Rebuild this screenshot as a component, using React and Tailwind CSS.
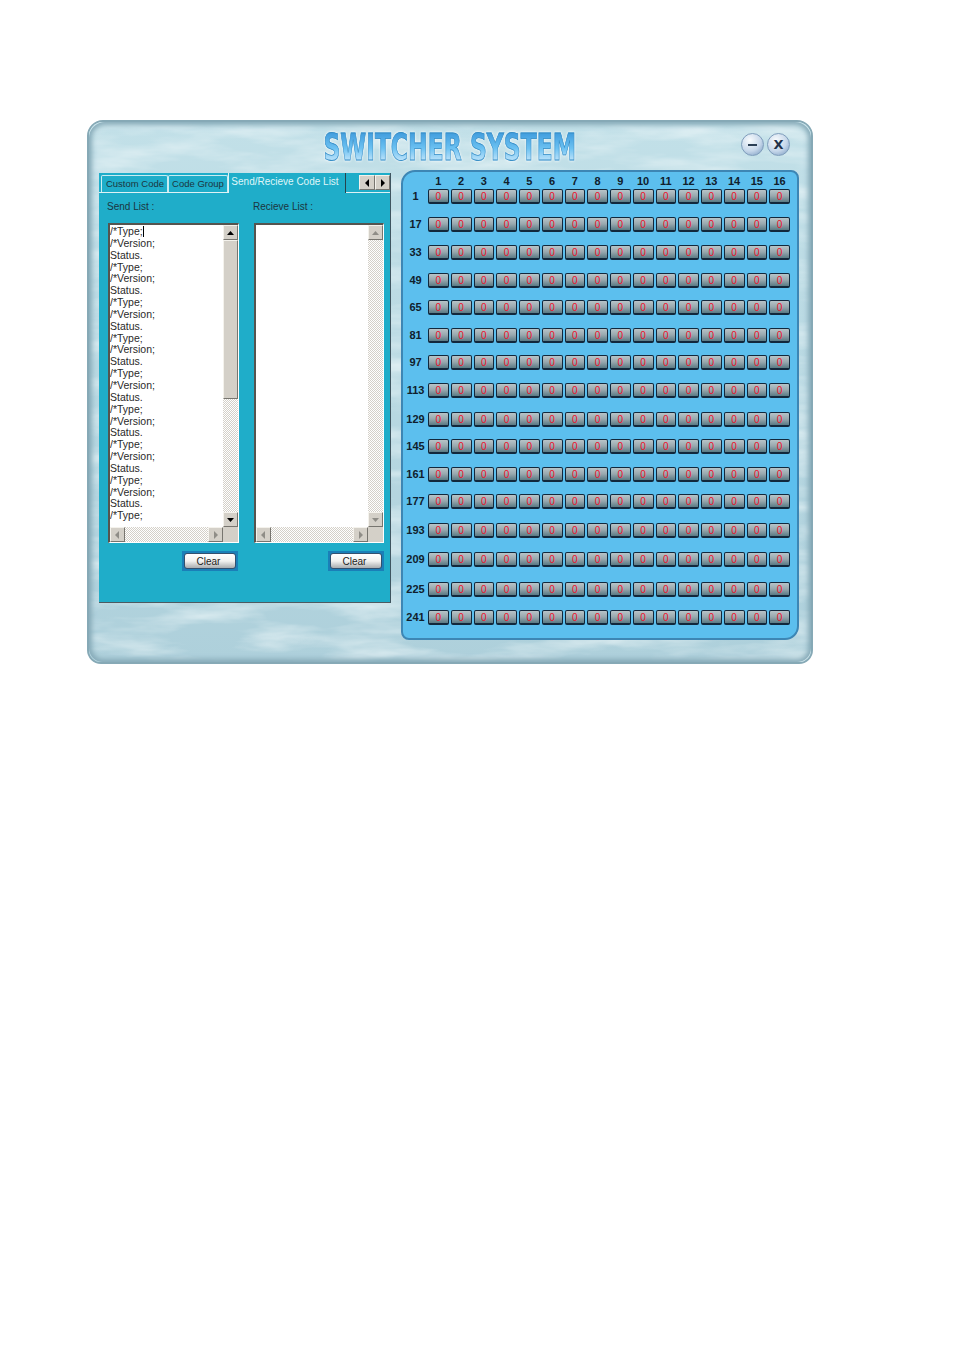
import React from 'react'

const rowMargins = [
  [1, 'mt-0'], [17, 'mt-[13px]'], [33, 'mt-[13px]'], [49, 'mt-[13px]'],
  [65, 'mt-[12px]'], [81, 'mt-[13px]'], [97, 'mt-[12px]'], [113, 'mt-[13px]'],
  [129, 'mt-[14px]'], [145, 'mt-[12px]'], [161, 'mt-[13px]'], [177, 'mt-[12px]'],
  [193, 'mt-[14px]'], [209, 'mt-[14px]'], [225, 'mt-[15px]'], [241, 'mt-[13px]'],
]
const columns = Array.from({ length: 16 }, (_, i) => i + 1)
const sendLines = Array.from({ length: 25 }, (_, i) => ['/*Type;', '/*Version;', 'Status.'][i % 3])

const bevel = 'border border-t-[#f4f2ec] border-l-[#f4f2ec] border-r-[#77756f] border-b-[#77756f] bg-[#d4d0c8]'
const hatch = 'bg-[repeating-conic-gradient(#d4d0c8_0_25%,#ffffff_0_50%)] bg-[length:2px_2px]'

const Arrow = ({ dir, color = '#000', size = 7 }) => {
  const points = { up: '0,6 7,6 3.5,2', down: '0,2 7,2 3.5,6', left: '5,0 5,8 1,4', right: '2,0 2,8 6,4' }
  return (
    <svg width={size} height={size + 1} viewBox="0 0 7 8">
      <polygon points={points[dir]} fill={color} />
    </svg>
  )
}

const ScrollButton = ({ dir, color, className = 'w-[15px] h-[15px]' }) => (
  <div className={`${bevel} ${className} flex items-center justify-center shrink-0`}>
    <Arrow dir={dir} color={color} />
  </div>
)

function ListBox({ lines, active }) {
  const arrow = active ? '#000' : '#8f8d87'
  return (
    <div className="w-[131px] h-[320px] flex flex-col border-t-2 border-l-2 border-t-[#55544f] border-l-[#55544f] border-r border-b border-r-white border-b-white bg-white">
      <div className="flex flex-1 min-h-0">
        <div className="flex-1 overflow-hidden pt-[1px] text-[10.5px] leading-[11.84px] text-[#2a2a2a]">
          {lines.map((line, i) => (
            <div key={i} className="whitespace-nowrap">
              {line}
              {i === 0 && <span className="inline-block w-px h-[11px] bg-black align-top" />}
            </div>
          ))}
        </div>
        <div className={`w-[15px] flex flex-col ${hatch}`}>
          <ScrollButton dir="up" color={arrow} />
          {active && <div className={`${bevel} h-[159px]`} />}
          <div className="flex-1" />
          <ScrollButton dir="down" color={arrow} />
        </div>
      </div>
      <div className={`h-[15px] flex ${hatch}`}>
        <ScrollButton dir="left" color="#8f8d87" />
        <div className="flex-1" />
        <ScrollButton dir="right" color="#8f8d87" />
        <div className="w-[15px] bg-[#d4d0c8]" />
      </div>
    </div>
  )
}

const ClearButton = () => (
  <div className="w-[56px] h-[20px] bg-[#1a7fb8] p-[2px] flex">
    <div className="flex-1 rounded-[3px] border border-[#32506e] bg-linear-to-b from-white via-[#f2f2f0] to-[#a9adb0] flex items-center justify-center pr-[3px] text-[10px] text-[#222]">
      Clear
    </div>
  </div>
)

function LeftPanel() {
  return (
    <div className="w-[292px] h-[430px] mt-[3px] relative bg-[#1fadc9] border-r border-b border-r-[#3f5560] border-b-[#4d5a60] font-['Liberation_Sans',sans-serif]">
      <div className="h-[20px] flex items-end border-b border-b-[#dff2f5] pl-[2px] text-[9.5px] text-[#1c3540]">
        <div className="w-[67px] h-[17px] border border-b-0 border-[#c9ecf2] rounded-t-[2px] pl-[1px] text-center leading-[16px]">Custom Code</div>
        <div className="w-[60px] h-[17px] border border-b-0 border-[#c9ecf2] rounded-t-[2px] text-center leading-[16px]">Code Group</div>
        <div className="w-[118px] h-[20px] -mb-px pr-[4px] bg-[#1fadc9] border-r border-r-[#26424c] border-l border-l-[#dff2f5] text-center text-[10px] leading-[18px] text-[#dff6f8] whitespace-nowrap">Send/Recieve Code List</div>
        <div className="ml-[13px] mb-[2px] flex">
          <ScrollButton dir="left" className="w-[16px] h-[15px]" />
          <ScrollButton dir="right" className="w-[15px] h-[15px]" />
        </div>
      </div>
      <div className="pl-[8px] pr-[6px]">
        <div className="flex h-[30px] pt-[6px] text-[10px] text-[#1c3540]">
          <div className="w-[146px]">Send List :</div>
          <div>Recieve List :</div>
        </div>
        <div className="flex gap-[15px] ml-px">
          <ListBox lines={sendLines} active />
          <ListBox lines={[]} />
        </div>
        <div className="flex justify-end gap-[90px] mt-[8px]">
          <ClearButton />
          <ClearButton />
        </div>
      </div>
    </div>
  )
}

function SwitchGrid() {
  return (
    <div className="w-[398px] h-[470px] bg-[#5cbfee] border-2 border-[#3d86b4] rounded-tl-[14px] rounded-tr-[8px] rounded-br-[14px] rounded-bl-[8px] pl-[1px] pr-[7px] font-['Liberation_Sans',sans-serif] font-bold text-[11px] text-[#10202c]">
      <div className="h-[17px] flex items-end">
        <div className="w-[24px] shrink-0" />
        <div className="flex-1 grid grid-cols-16 gap-[2px] leading-[16px]">
          {columns.map(c => <div key={c} className="text-center">{c}</div>)}
        </div>
      </div>
      {rowMargins.map(([label, margin]) => (
        <div key={label} className={`${margin} h-[15px] flex items-center`}>
          <div className="w-[23px] mr-px shrink-0 text-center">{label}</div>
          <div className="flex-1 grid grid-cols-16 gap-[2px]">
            {columns.map(c => (
              <div key={c} className="h-[15px] rounded-[2px] border border-b-2 border-[#12283c] bg-linear-to-b from-[#b8c4c8] via-[#98a8ae] to-[#5a7a84] flex items-center justify-center font-normal text-[10px] text-[#ee1029]">
                0
              </div>
            ))}
          </div>
        </div>
      ))}
    </div>
  )
}

const RoundButton = ({ children }) => (
  <div className="w-[23px] h-[23px] rounded-full border border-[#7f9dbb] bg-[radial-gradient(circle_at_38%_30%,#f8fbfd,#c6d7ea_55%,#7396bd)] flex items-center justify-center">
    {children}
  </div>
)

export default function App() {
  return (
    <div className="min-h-[1350px] bg-white pt-[120px] pl-[87px]">
      <div className="relative w-[726px] h-[544px] overflow-hidden rounded-tl-[16px] rounded-tr-[16px] rounded-bl-[14px] rounded-br-[14px] border-2 border-[#86a9b6] bg-[#b4d4de]">
        <svg className="absolute inset-0 w-full h-full" aria-hidden="true">
          <defs>
            <linearGradient id="waterBase" x1="0" y1="0" x2="0" y2="1">
              <stop offset="0" stopColor="#c2e0e8" />
              <stop offset="1" stopColor="#aed0db" />
            </linearGradient>
          </defs>
          <filter id="water">
            <feTurbulence type="fractalNoise" baseFrequency="0.012 0.055" numOctaves="4" seed="7" />
            <feColorMatrix values="0 0 0 0 0.82  0 0 0 0 0.91  0 0 0 0 0.93  1.4 0 0 0 -0.55" />
          </filter>
          <rect width="100%" height="100%" fill="url(#waterBase)" />
          <rect width="100%" height="100%" filter="url(#water)" />
        </svg>
        <div className="absolute inset-0 rounded-[inherit] pointer-events-none shadow-[inset_0_0_5px_3px_#86aab8]" />
        <div className="relative">
          <div className="h-[48px] relative flex justify-center">
            <div className="mt-[5px] origin-center scale-x-[0.617] text-[38px] leading-[40px] font-bold font-['DejaVu_Sans',sans-serif] text-transparent bg-clip-text bg-linear-to-b from-[#2f8fd6] via-[#6cc2f2] to-[#f4fbfe] [-webkit-text-stroke:0.8px_#3a8fc6] drop-shadow-[0_0_1.5px_#ffffff] whitespace-nowrap">
              SWITCHER SYSTEM
            </div>
            <div className="absolute top-[11px] left-[652px] flex gap-[3px]">
              <RoundButton>
                <div className="w-[9px] h-[2px] bg-[#2b3f55]" />
              </RoundButton>
              <RoundButton>
                <span className="font-['DejaVu_Sans',sans-serif] font-bold text-[13px] leading-none text-[#22324a]">X</span>
              </RoundButton>
            </div>
          </div>
          <div className="flex pl-[10px] gap-[10px]">
            <LeftPanel />
            <SwitchGrid />
          </div>
        </div>
      </div>
    </div>
  )
}
